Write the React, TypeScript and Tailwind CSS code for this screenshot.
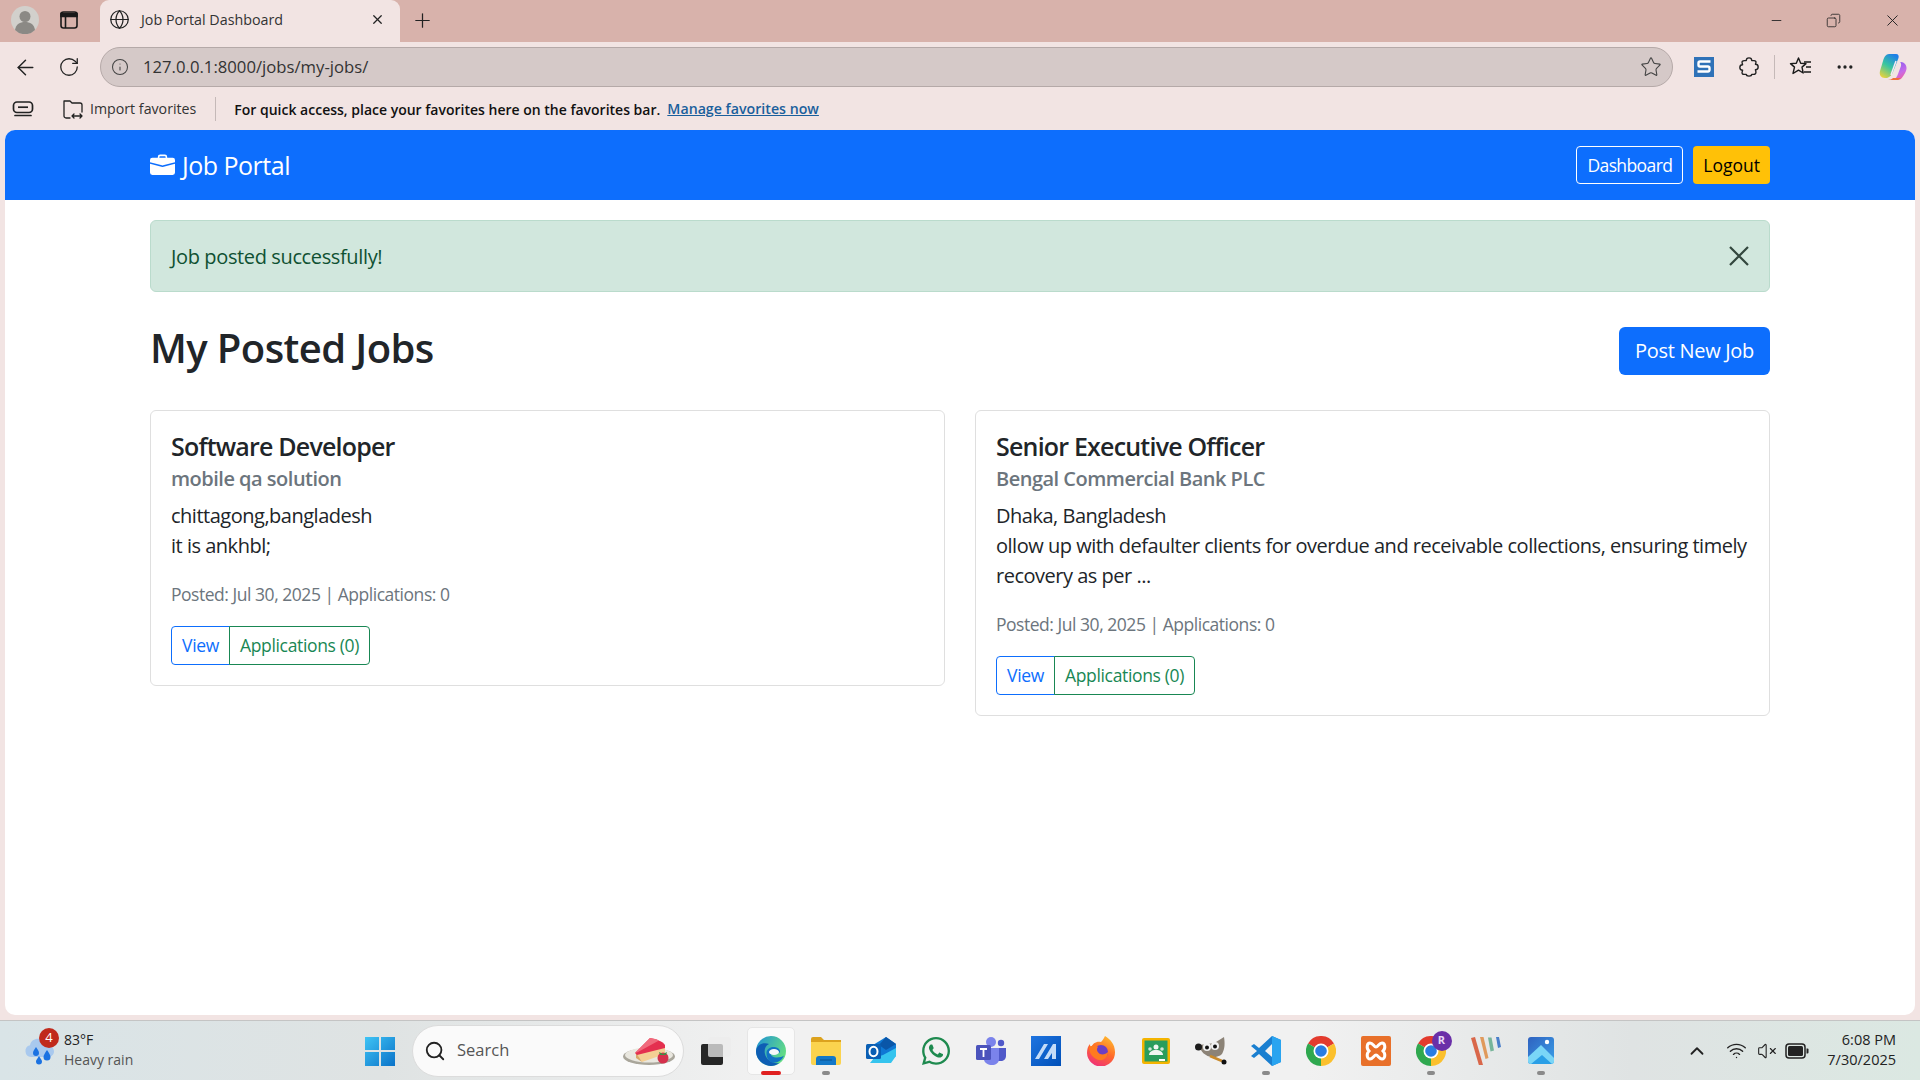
import React from 'react'
import { ArrowLeft, RotateCw, Info, Star, Ellipsis, Minus, X, Plus, Globe, Copy, Search, ChevronUp, Wifi, VolumeX } from 'lucide-react'
import { BsBriefcaseFill } from 'react-icons/bs'
import { FaWhatsapp } from 'react-icons/fa'

function ProfileIcon() {
  return (
    <svg width="28" height="28" viewBox="0 0 28 28">
      <circle cx="14" cy="14" r="14" fill="#d2d0cc" />
      <circle cx="14" cy="10.5" r="5.5" fill="#8b8985" />
      <path d="M4 24c1-6 5-8 10-8s9 2 10 8a14 14 0 0 1-20 0z" fill="#8b8985" />
    </svg>
  )
}

function TabsIcon() {
  return (
    <svg width="20" height="20" viewBox="0 0 20 20" fill="none" stroke="#1a1a1a" strokeWidth="1.6">
      <rect x="2" y="2" width="16" height="16" rx="2.5" />
      <path d="M2 3.5h16v3H2z" fill="#1a1a1a" />
      <path d="M6.5 6v12" />
    </svg>
  )
}

function FavoritesIcon() {
  return (
    <svg width="24" height="24" viewBox="0 0 24 24" fill="none" stroke="#1a1a1a" strokeWidth="1.4" strokeLinejoin="round">
      <path d="M9.500 3l2.200 5.200 5.300.4-4 3.500 1.200 5.900-4.700-2.900-5.500 3.400 1.500-6.400-4-3.500 5.800-.4z" />
      <path d="M15 7h7M17 12h5M15 17h7" />
    </svg>
  )
}

function PuzzleIcon() {
  return (
    <svg width="22" height="22" viewBox="0 0 24 24" fill="none" stroke="#222" strokeWidth="1.5" strokeLinejoin="round">
      <path d="M9 5c0-2 1.500-3 3-3s3 1 3 3h2.500c1.500 0 2.500 1 2 2.500l-.5 1.500c2 0 3 1.500 3 3s-1 3-3 3l.5 2c.5 2-1 3-2.500 3H15c0 1.500-1.500 2-3 2s-3-.5-3-2H6.500C5 20 4 19 4.500 17.500L5 15.500c-2 0-3-1.500-3-3s1-3 3-3l-.5-2C4 6 5 5 7 5z" />
    </svg>
  )
}

function CopilotIcon() {
  return (
    <svg width="28" height="28" viewBox="0 0 28 28">
      <defs>
        <linearGradient id="cp1" x1="0.7" y1="0" x2="0.2" y2="1">
          <stop offset="0" stopColor="#1f7fe8" />
          <stop offset="0.5" stopColor="#38c6a0" />
          <stop offset="1" stopColor="#e8d23c" />
        </linearGradient>
        <linearGradient id="cp2" x1="0.3" y1="0" x2="0.7" y2="1">
          <stop offset="0" stopColor="#8b5cf0" />
          <stop offset="0.6" stopColor="#c86be8" />
          <stop offset="1" stopColor="#f0609c" />
        </linearGradient>
      </defs>
      <path d="M10 1h7c2.500 0 3 2 2.500 4L14 19c-1 3-3 5-6 6H6c-4 0-6-3-5-7l3-10c1-4 3-7 6-7z" fill="url(#cp1)" />
      <path d="M17 9h5c3 0 6 3 5.500 7-.5 3-2 5-4 8-1 2-3 3-5 3h-5c3-1 4.500-3 5.500-6l3-8c.5-2-.5-4-1-4z" fill="url(#cp2)" />
      <path d="M9 27h9c1 0 2.500-.5 3.500-2H14c-1 1-3 2-5 2z" fill="#f0703c" />
      <path d="M17 8l-5 14" stroke="#f5e8f5" strokeWidth="1.500" />
    </svg>
  )
}

function SnagitIcon() {
  return (
    <svg width="20" height="20" viewBox="0 0 20 20" fill="none">
      <rect width="20" height="20" fill="#2f72b8" />
      <path d="M16.500 4.500H6a1.500 1.500 0 0 0-1.500 1.500v2A1.500 1.500 0 0 0 6 9.500h8a1.500 1.500 0 0 1 1.500 1.500v2a1.500 1.500 0 0 1-1.500 1.500H3.500" stroke="#fff" strokeWidth="2.400" />
    </svg>
  )
}

function ImportIcon() {
  return (
    <svg width="22" height="22" viewBox="0 0 22 22" fill="none" stroke="#222" strokeWidth="1.3" strokeLinecap="round" strokeLinejoin="round">
      <path d="M8 20H4a2 2 0 0 1-2-2V3h6l2 2h8a2 2 0 0 1 2 2v7" />
      <path d="M10 18h10M12 16l-2 2 2 2M18 16l2 2-2 2" />
    </svg>
  )
}

function CollectionsIcon() {
  return (
    <svg width="22" height="18" viewBox="0 0 22 18" fill="none" stroke="#222" strokeWidth="1.700">
      <rect x="1.500" y="2" width="19" height="10.500" rx="3.500" />
      <path d="M6 7.200h10" />
      <path d="M3 15.500h16" strokeLinecap="round" />
    </svg>
  )
}

function BrowserChrome() {
  return (
    <div className="shrink-0 bg-[#f2e4e3]">
      <div className="flex h-[42px] items-start bg-[#d8b2ab]">
        <div className="flex h-[40px] w-[49px] items-center justify-center"><ProfileIcon /></div>
        <div className="flex h-[40px] w-[51px] items-center justify-center pr-[11px]"><TabsIcon /></div>
        <div className="flex h-[42px] w-[300px] items-center rounded-t-[9px] bg-[#f2e4e3] pb-[3px] pl-[9px] pr-[15px]">
          <Globe size={21} strokeWidth={1.4} className="text-[#222]" />
          <span className="ml-[11px] flex-1 text-[14.3px] text-[#333]">Job Portal Dashboard</span>
          <X size={15} strokeWidth={2} className="text-[#222]" />
        </div>
        <div className="flex h-[40px] w-[22px] items-center pl-[11px]">
          <Plus size={23} strokeWidth={1.3} className="shrink-0 text-[#222]" />
        </div>
        <div className="flex-1" />
        <div className="flex h-[40px] items-center gap-[42px] pr-[18px] text-[#222]">
          <Minus size={15} strokeWidth={1.4} />
          <Copy size={15} strokeWidth={1.3} className="-scale-x-100" />
          <X size={19} strokeWidth={1.2} />
        </div>
      </div>
      <div className="flex h-[50px] items-center">
        <div className="flex w-[100px] items-center justify-between pl-[13px] pr-[20px]">
          <ArrowLeft size={25} strokeWidth={1.4} className="text-[#222]" />
          <RotateCw size={22} strokeWidth={1.4} className="text-[#222]" />
        </div>
        <div className="flex h-[40px] w-[1573px] items-center rounded-full border border-[#b5a9a8] bg-[#d5c9c8] pl-[10px] pr-[10px]">
          <Info size={18} strokeWidth={1.4} className="text-[#444]" />
          <span className="ml-[14px] flex-1 text-[16.7px] text-[#333]">127.0.0.1:8000/jobs/my-jobs/</span>
          <Star size={22} strokeWidth={1.2} className="text-[#444]" />
        </div>
        <div className="flex flex-1 items-center pl-[21px]">
          <SnagitIcon />
          <div className="ml-[24px]"><PuzzleIcon /></div>
          <div className="ml-[14px] h-[24px] w-px bg-[#c5b9b8]" />
          <div className="ml-[14px]"><FavoritesIcon /></div>
          <Ellipsis size={20} className="ml-[22px] text-[#222]" />
          <div className="ml-[24px]"><CopilotIcon /></div>
        </div>
      </div>
      <div className="flex h-[38px] items-center pb-[4px]">
        <div className="ml-[12px]"><CollectionsIcon /></div>
        <div className="ml-[28px]"><ImportIcon /></div>
        <span className="ml-[6px] text-[14.2px] text-[#333]">Import favorites</span>
        <div className="ml-[19px] h-[24px] w-px bg-[#c5b9b8]" />
        <span className="ml-[18px] text-[14px] font-semibold text-[#111]">For quick access, place your favorites here on the favorites bar.</span>
        <a className="ml-[7px] text-[14.2px] font-semibold text-[#1a5f9c] underline">Manage favorites now</a>
      </div>
    </div>
  )
}

function JobCard({ title, company, location, description }: { title: string; company: string; location: string; description: string }) {
  return (
    <div className="rounded-[6px] border border-[#dfdfdf] bg-white p-[20px]">
      <h5 className="text-[25px] leading-[30px] font-semibold tracking-[-0.8px] text-[#212529]">{title}</h5>
      <h6 className="mt-[6px] text-[20px] leading-[24px] font-semibold tracking-[-0.5px] text-[#6c757d]">{company}</h6>
      <p className="mt-[10px] text-[20px] leading-[30px] tracking-[-0.49px] text-[#212529]">
        {location}
        <br />
        {description}
      </p>
      <p className="mt-[20px] text-[17.5px] leading-[26px] tracking-[-0.47px] text-[#6c757d]">Posted: Jul 30, 2025 | Applications: 0</p>
      <div className="mt-[19px] flex">
        <button className="h-[39px] rounded-l-[4px] border border-[#0d6efd] px-[10px] text-[17.5px] tracking-[-0.3px] text-[#0d6efd]">View</button>
        <button className="-ml-px h-[39px] rounded-r-[4px] border border-[#198754] px-[10px] text-[17.5px] tracking-[-0.35px] text-[#198754]">Applications (0)</button>
      </div>
    </div>
  )
}

function Page() {
  return (
    <div className="mx-[5px] mb-[5px] min-h-0 flex-1 rounded-[10px] bg-white">
      <nav className="flex h-[70px] items-center justify-between rounded-t-[10px] bg-[#0d6efd] px-[145px]">
        <div className="flex items-center text-[25px] tracking-[-0.5px] text-white">
          <BsBriefcaseFill size={25} />
          <span className="ml-[7px] pt-[1px]">Job Portal</span>
        </div>
        <div className="flex gap-[10px]">
          <button className="h-[38px] rounded-[4px] border border-white px-[10px] text-[17.5px] tracking-[-0.6px] text-white">Dashboard</button>
          <button className="h-[38px] rounded-[4px] bg-[#ffc107] px-[10px] text-[17.5px] text-black">Logout</button>
        </div>
      </nav>
      <div className="mx-[145px] pt-[20px]">
        <div className="flex h-[72px] items-center justify-between rounded-[6px] border border-[#badbcc] bg-[#d1e7dd] pl-[20px] pr-[20px] text-[20px] text-[#0f5132]">
          <span className="pt-[1px] tracking-[-0.37px]">Job posted successfully!</span>
          <svg width="20" height="20" viewBox="0 0 20 20" stroke="#33473e" strokeWidth="2.2"><path d="M1 1l18 18M19 1L1 19" /></svg>
        </div>
        <div className="mt-[35px] flex items-start justify-between">
          <h2 className="text-[40px] leading-[41px] font-semibold tracking-[-0.6px] text-[#212529]">My Posted Jobs</h2>
          <button className="h-[48px] rounded-[6px] bg-[#0d6efd] px-[16px] text-[20px] tracking-[-0.3px] text-white">Post New Job</button>
        </div>
        <div className="mt-[35px] grid grid-cols-2 items-start gap-[30px]">
          <JobCard title="Software Developer" company="mobile qa solution" location="chittagong,bangladesh" description="it is ankhbl;" />
          <JobCard title="Senior Executive Officer" company="Bengal Commercial Bank PLC" location="Dhaka, Bangladesh" description="ollow up with defaulter clients for overdue and receivable collections, ensuring timely recovery as per ..." />
        </div>
      </div>
    </div>
  )
}

function WindowsIcon() {
  return (
    <svg width="30" height="30" viewBox="0 0 30 30">
      <defs>
        <linearGradient id="win" x1="0" y1="0" x2="1" y2="1">
          <stop offset="0" stopColor="#3fc4f5" />
          <stop offset="1" stopColor="#0a72c8" />
        </linearGradient>
      </defs>
      <path d="M0 1h14v13H0zM16 1h14v13H16zM0 16h14v14H0zM16 16h14v14H16z" fill="url(#win)" />
    </svg>
  )
}

function WeatherIcon() {
  return (
    <svg width="32" height="32" viewBox="0 0 32 32">
      <path d="M7 22a6 6 0 0 1-1-11.800C7 5 12 3 16 4c4 1 6 3 7 6 4 0 7 3 7 6.500S27 22 24 22z" fill="#a9c9ee" />
      <path d="M12 12c2 3 3 4 3 6a3 3 0 0 1-6 0c0-2 1-3 3-6zM23 15c2 3 3.500 5 3.500 7a3.500 3.500 0 0 1-7 0c0-2 1.500-4 3.500-7zM15 21c1.500 2.500 3 4 3 5.500a3 3 0 0 1-6 0c0-1.500 1.500-3 3-5.500z" fill="#1b72e2" />
    </svg>
  )
}

function CakeIcon() {
  return (
    <svg width="52" height="28" viewBox="0 0 52 28">
      <ellipse cx="26" cy="19.500" rx="26" ry="8.500" fill="#a9a69b" />
      <ellipse cx="26" cy="18" rx="24" ry="7.500" fill="#e9e7df" />
      <path d="M13 16L42 9v8L19 25z" fill="#f4cf94" />
      <path d="M13 15.500L19 25l-6-4z" fill="#d9a868" />
      <path d="M12 16L27 1c6 1 12 3 15 7v3L14 18z" fill="#e4304f" />
      <path d="M12 16L27 1c4 .6 7 1.500 9 2.500L15 15z" fill="#f06a7c" />
      <circle cx="40" cy="21" r="5.500" fill="#d5304c" />
      <path d="M36 15l4 2 4-2-1 3h-6z" fill="#3f8f45" />
    </svg>
  )
}

function EdgeIcon() {
  return (
    <svg width="30" height="30" viewBox="0 0 30 30">
      <defs>
        <linearGradient id="edge" x1="0" y1="0" x2="1" y2="0.5">
          <stop offset="0" stopColor="#1d90d8" />
          <stop offset="1" stopColor="#63dc85" />
        </linearGradient>
      </defs>
      <circle cx="15" cy="15" r="15" fill="url(#edge)" />
      <path d="M0 15C1 8 8 6 13 8c-4 2-5 6-4 10 1 5 7 10 14 9-2 2-5 3-8 3C7 30 0 23 0 15z" fill="#0e5eb4" />
      <path d="M10.500 17c0-4 4-6.500 8-6 4 .5 6 3 5.500 5.500h-9c-1 3 2 5 6 5 2.500 0 6-1 7-2-2 5-7 8-12 7-3-1-5.500-4-5.500-9.500z" fill="#1272c4" />
      <ellipse cx="18" cy="16" rx="5" ry="3" fill="#f6f8fa" />
    </svg>
  )
}

function FilesIcon() {
  return (
    <svg width="30" height="28" viewBox="0 0 30 28">
      <path d="M0 2a2 2 0 0 1 2-2h8l3 3h17v5H0z" fill="#dca21e" />
      <path d="M0 5h30v21a2 2 0 0 1-2 2H2a2 2 0 0 1-2-2z" fill="#fbd34e" />
      <path d="M5 28v-6a3 3 0 0 1 3-3h14a3 3 0 0 1 3 3v6z" fill="#1378c8" />
      <path d="M9 23h12" stroke="#0c5ea3" strokeWidth="1.500" />
    </svg>
  )
}

function OutlookIcon() {
  return (
    <svg width="30" height="28" viewBox="0 0 30 28">
      <path d="M7 8l13-8 10 7v12l-10 7H7z" fill="#0f78d4" />
      <path d="M20 0l10 7-10 6-7-5z" fill="#0a56a8" />
      <path d="M4 26h21l5-7V11l-13 7-9 3z" fill="#35c4ee" />
      <rect x="0" y="7" width="15" height="15" rx="1.500" fill="#0a5fb4" />
      <ellipse cx="7.500" cy="14.500" rx="4" ry="4.800" fill="none" stroke="#fff" strokeWidth="2" />
    </svg>
  )
}

function TeamsIcon() {
  return (
    <svg width="30" height="28" viewBox="0 0 30 28">
      <circle cx="15" cy="5" r="5" fill="#7b83eb" />
      <circle cx="25" cy="6" r="3.200" fill="#5059c9" />
      <path d="M20 11h10v8c0 3-2.500 5-5 5h-5z" fill="#5059c9" />
      <path d="M8 11h15v11c0 4-3.500 6-7 6s-8-2-8-6z" fill="#7b83eb" />
      <rect x="0" y="8" width="15" height="15" rx="1.500" fill="#4b53bc" />
      <path d="M4 12h7M7.500 12v8" stroke="#fff" strokeWidth="1.800" />
    </svg>
  )
}

function MIcon() {
  return (
    <svg width="30" height="30" viewBox="0 0 30 30">
      <defs>
        <linearGradient id="mi" x1="0" y1="0" x2="1" y2="1">
          <stop offset="0" stopColor="#1e74e0" />
          <stop offset="1" stopColor="#0050b8" />
        </linearGradient>
      </defs>
      <rect width="30" height="30" fill="url(#mi)" />
      <path d="M4 23L13 8h4L8 23zM13 23L22 8h3v15h-4v-6l-4 6z" fill="#c4dcf8" />
    </svg>
  )
}

function FirefoxIcon() {
  return (
    <svg width="30" height="30" viewBox="0 0 30 30">
      <defs>
        <linearGradient id="ff" x1="0.8" y1="0" x2="0.3" y2="1">
          <stop offset="0" stopColor="#ffbd2e" />
          <stop offset="0.5" stopColor="#ff6a2a" />
          <stop offset="1" stopColor="#f0307a" />
        </linearGradient>
      </defs>
      <path d="M19 0c5 3 10 8 10 16a14 14 0 0 1-28 1c0-4 1-7 3-9 0 2 .5 3 1.500 4C6 7 11 5 15 6c2-2 3-4 4-6z" fill="url(#ff)" />
      <circle cx="15" cy="16" r="7" fill="#6d3fc4" />
      <path d="M3 11c3-2 7-2 9 0-2 2-1 5 2 7 3 1 6 0 8-2 0 5-4 9-9 8-5-1-10-6-10-13z" fill="#ff7a1f" />
    </svg>
  )
}

function ClassroomIcon() {
  return (
    <svg width="28" height="26" viewBox="0 0 28 26">
      <rect width="28" height="26" rx="2" fill="#f4b400" />
      <rect x="2.500" y="2.500" width="23" height="21" fill="#2a9d5c" />
      <circle cx="14" cy="9" r="2.500" fill="#f1f6f2" />
      <circle cx="8" cy="11" r="1.800" fill="#cfe6d6" />
      <circle cx="20" cy="11" r="1.800" fill="#cfe6d6" />
      <path d="M7 17c0-3 3-5 7-5s7 2 7 5z" fill="#f1f6f2" />
      <rect x="17" y="21" width="6" height="2" fill="#fff" />
    </svg>
  )
}

function GimpIcon() {
  return (
    <svg width="32" height="28" viewBox="0 0 32 28">
      <path d="M4 8c6-1 12-1 17-3l8-5c1 6 1 12-2 17-4 4-12 4-16 1-4-2-6-6-7-10z" fill="#8c8377" />
      <circle cx="3.500" cy="10" r="3.500" fill="#1c1c1c" />
      <circle cx="12" cy="10" r="4" fill="#f1f1f1" />
      <circle cx="20" cy="9" r="4" fill="#f1f1f1" />
      <circle cx="12" cy="10.500" r="2" fill="#111" />
      <circle cx="20" cy="9.500" r="2" fill="#111" />
      <path d="M15 19l12 5" stroke="#c98a2b" strokeWidth="2.500" />
      <circle cx="29" cy="25" r="2.500" fill="#111" />
    </svg>
  )
}

function VsCodeIcon() {
  return (
    <svg width="30" height="30" viewBox="0 0 30 30">
      <path d="M21 0l9 4v22l-9 4L8 18l-5 4-3-2 6-5-6-5 3-2 5 4z" fill="#1a7fd0" />
      <path d="M21 0l9 4v22l-9 4z" fill="#29a4f0" />
      <path d="M21 8l-7 7 7 6z" fill="#f2f2f2" />
    </svg>
  )
}

function ChromeIcon() {
  return (
    <svg width="30" height="30" viewBox="0 0 30 30">
      <path d="M15 15L2 7.500A15 15 0 0 1 28 7.500z" fill="#e33b2e" />
      <path d="M15 15L28 7.500A15 15 0 0 1 15 30z" fill="#fbc02d" />
      <path d="M15 15L15 30A15 15 0 0 1 2 7.500z" fill="#2fa84f" />
      <circle cx="15" cy="15" r="7.500" fill="#fff" />
      <circle cx="15" cy="15" r="5.800" fill="#2a7de1" />
    </svg>
  )
}

function XamppIcon() {
  return (
    <svg width="30" height="30" viewBox="0 0 30 30">
      <rect width="30" height="30" rx="2" fill="#e8702a" />
      <path d="M9 7c3 0 4 4 6 4s3-4 6-4 4 5 1 8c3 3 2 8-1 8s-4-4-6-4-3 4-6 4-4-5-1-8c-3-3-2-8 1-8z" fill="none" stroke="#fff" strokeWidth="3" />
    </svg>
  )
}

function StripesIcon() {
  return (
    <svg width="30" height="28" viewBox="0 0 30 28">
      <path d="M0 1l4-1 8 28-4 .5z" fill="#d9674a" />
      <path d="M9 0h3.500l5 21-3 1z" fill="#e09a5c" />
      <path d="M17 .5h3.500l2.500 13-3.500 1z" fill="#77b59a" />
      <path d="M25 0h3l2 10-3 1z" fill="#4a7fc9" />
    </svg>
  )
}

function PhotosIcon() {
  return (
    <svg width="26" height="27" viewBox="0 0 26 27">
      <defs>
        <linearGradient id="ph" x1="0" y1="0" x2="1" y2="1">
          <stop offset="0" stopColor="#2f62c0" />
          <stop offset="1" stopColor="#3aa0e8" />
        </linearGradient>
      </defs>
      <rect width="26" height="27" rx="3" fill="url(#ph)" />
      <circle cx="19" cy="5" r="2.200" fill="#fff" />
      <path d="M0 20L13 8l13 13v3a3 3 0 0 1-3 3H3a3 3 0 0 1-3-3z" fill="#7ad6f7" />
      <path d="M3 27l11-9 10 9z" fill="#2a9fe6" />
    </svg>
  )
}

function BatteryIcon() {
  return (
    <svg width="24" height="16" viewBox="0 0 24 16">
      <rect x="1" y="1" width="19" height="14" rx="3" fill="none" stroke="#222" strokeWidth="1.500" />
      <rect x="3" y="3" width="15" height="10" rx="1.500" fill="#222" />
      <path d="M21.500 5.500h1a1 1 0 0 1 1 1v3a1 1 0 0 1-1 1h-1z" fill="#222" />
    </svg>
  )
}

function TaskItem({ children, dot, active }: { children: React.ReactNode; dot?: boolean; active?: boolean }) {
  return (
    <div className="relative flex h-[56px] w-[55px] shrink-0 items-center justify-center">
      {active && <span className="absolute h-[48px] w-[48px] rounded-[5px] border border-[#e6e6e6] bg-[#fafafa]" />}
      <div className="relative flex">{children}</div>
      {dot && <span className="absolute bottom-[4px] h-[4px] w-[8px] rounded-full bg-[#8a8a8a]" />}
      {active && <span className="absolute bottom-[4px] h-[4px] w-[20px] rounded-full bg-[#e02020]" />}
    </div>
  )
}

function Taskbar() {
  return (
    <div className="flex h-[60px] shrink-0 items-center border-t border-[#c4c4c4] bg-[linear-gradient(90deg,#d9e4e7_0%,#dfe3e3_20%,#f1f1f1_40%,#f1f1f1_68%,#dfe3e3_85%,#dbe8e2_100%)]">
      <div className="relative flex w-[352px] shrink-0 items-center pl-[24px]">
        <WeatherIcon />
        <span className="absolute left-[39px] top-[-2px] flex h-[20px] w-[20px] items-center justify-center rounded-full bg-[#c02a1c] text-[13px] text-white">4</span>
        <div className="ml-[8px] pb-[2px] text-[14px] leading-[20px]">
          <div className="text-[#222]">83°F</div>
          <div className="text-[#555]">Heavy rain</div>
        </div>
      </div>
      <TaskItem><WindowsIcon /></TaskItem>
      <div className="ml-[5px] mr-[4px] flex h-[52px] w-[272px] shrink-0 items-center rounded-full border border-[#dcdcdc] bg-[#fafafa] pl-[11px] pr-[8px]">
        <Search size={22} strokeWidth={2} className="text-[#222]" />
        <span className="ml-[11px] flex-1 text-[16.5px] text-[#555]">Search</span>
        <CakeIcon />
      </div>
      <TaskItem>
        <div className="relative h-[28px] w-[30px]">
          <div className="absolute bottom-0 left-0 h-[21px] w-[22px] rounded-[2px] bg-[#262626]" />
          <div className="absolute right-0 top-0 h-[20px] w-[23px] rounded-[2px] bg-[#ececec]/75" />
        </div>
      </TaskItem>
      <TaskItem active><EdgeIcon /></TaskItem>
      <TaskItem dot><FilesIcon /></TaskItem>
      <TaskItem><OutlookIcon /></TaskItem>
      <TaskItem><FaWhatsapp size={32} color="#1e8a4f" /></TaskItem>
      <TaskItem><TeamsIcon /></TaskItem>
      <TaskItem><MIcon /></TaskItem>
      <TaskItem><FirefoxIcon /></TaskItem>
      <TaskItem><ClassroomIcon /></TaskItem>
      <TaskItem><GimpIcon /></TaskItem>
      <TaskItem dot><VsCodeIcon /></TaskItem>
      <TaskItem><ChromeIcon /></TaskItem>
      <TaskItem><XamppIcon /></TaskItem>
      <TaskItem dot>
        <ChromeIcon />
        <span className="absolute right-[-6px] top-[-5px] flex h-[20px] w-[20px] items-center justify-center rounded-full bg-[#6a2fa8] text-[11px] font-bold text-[#e8d8f5]">R</span>
      </TaskItem>
      <TaskItem><StripesIcon /></TaskItem>
      <TaskItem dot><PhotosIcon /></TaskItem>
      <div className="flex flex-1 items-center pl-[118px] text-[#222]">
        <ChevronUp size={22} strokeWidth={2} />
        <Wifi size={21} strokeWidth={1.6} className="ml-[18px]" />
        <VolumeX size={20} strokeWidth={1.3} className="ml-[10px]" />
        <div className="ml-[8px]"><BatteryIcon /></div>
        <div className="ml-auto pb-[2px] pr-[24px] text-right text-[14.5px] leading-[20px] text-[#222]">
          <div>6:08 PM</div>
          <div>7/30/2025</div>
        </div>
      </div>
    </div>
  )
}

export default function App() {
  return (
    <div className="flex h-[1080px] w-[1920px] flex-col overflow-hidden bg-[#f2e4e3] font-['Open_Sans','Noto_Sans',sans-serif]">
      <BrowserChrome />
      <Page />
      <Taskbar />
    </div>
  )
}
